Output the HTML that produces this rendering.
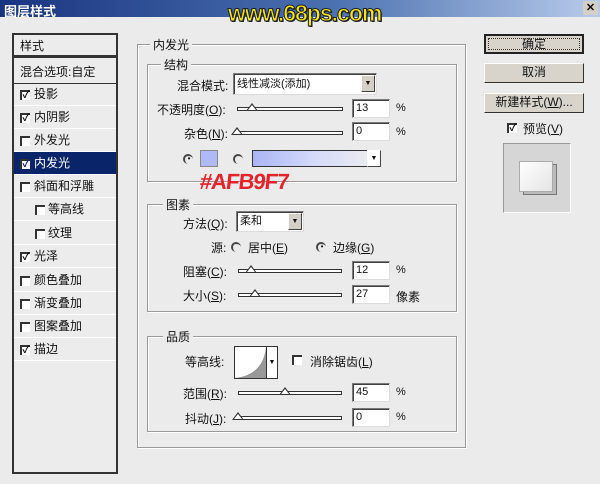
<!DOCTYPE html><html><head><meta charset="utf-8"><style>
*{margin:0;padding:0;box-sizing:border-box}
body{width:600px;height:484px;background:#ebebeb;font-family:"Liberation Sans","Noto Sans CJK SC",sans-serif;font-size:12px;color:#111;position:relative;overflow:hidden}
.a{position:absolute;white-space:nowrap}
.title{left:0;top:0;width:600px;height:17px;background:linear-gradient(90deg,#1a3580,#4a70b0 55%,#b8cbea)}
.grp{position:absolute;border:1px solid #9a9a9a;box-shadow:1px 1px 0 #fff inset,1px 1px 0 #fff}
.lbl{position:absolute;background:#ebebeb;padding:0 3px;font-size:12px}
.inp{position:absolute;background:#fff;border:1px solid #7a7a7a;border-right-color:#ddd;border-bottom-color:#ddd;box-shadow:1px 1px 0 #404040 inset;font-size:11px;padding-left:3px;line-height:17px}
.trk{position:absolute;height:4px;border:1px solid #333;background:#fff}
.th{position:absolute;width:0;height:0;border-left:6px solid transparent;border-right:6px solid transparent;border-bottom:8px solid #333}
.th:after{content:"";position:absolute;left:-4px;top:2px;border-left:4px solid transparent;border-right:4px solid transparent;border-bottom:5px solid #fff}
.cb{position:absolute;width:10px;height:10px;border-top:2px solid #333;border-left:2px solid #333;background:#fff;font-size:10px;line-height:8px;text-align:center;font-weight:bold}
.row{position:absolute;left:14px;width:102px;height:23px;border-bottom:1px solid #fff;line-height:22px;padding-left:6px}
.btn{position:absolute;left:484px;width:100px;height:20px;background:#d8d4cc;border:1px solid #fff;border-right-color:#333;border-bottom-color:#333;text-align:center;line-height:17px}
.dd{position:absolute;width:14px;height:17px;background:#d4d0c8;border:1px solid #fff;border-right-color:#444;border-bottom-color:#444;font-size:7px;text-align:center;line-height:15px}
.rd{position:absolute;width:10px;height:10px;border-radius:50%;border-top:2px solid #444;border-left:2px solid #444;font-size:8px;line-height:6px;text-align:center}
</style></head><body>
<div class="a title"></div>
<div class="a" style="left:4px;top:1px;color:#fff;font-weight:bold;font-size:13px">图层样式</div>
<div class="a" style="left:228px;top:0px;font-size:23px;font-weight:bold;color:#f5e51c;-webkit-text-stroke:1px #222;letter-spacing:-1px;text-shadow:1px 1px 0 #222">www.68ps.com</div>
<div class="a" style="left:583px;top:1px;width:15px;height:14px;background:#d4d0c8;font-size:11px;font-weight:bold;text-align:center;line-height:14px">✕</div>

<div class="a" style="left:12px;top:33px;width:106px;height:441px;border:2px solid #333;background:#ececec"></div>
<div class="row" style="top:35px;border-bottom:3px solid #333">样式</div>
<div class="row" style="top:61px;border-bottom:1px solid #333">混合选项:自定</div>
<div class="row" style="top:83px;padding-left:20px">投影</div>
<div class="row" style="top:106px;padding-left:20px">内阴影</div>
<div class="row" style="top:129px;padding-left:20px">外发光</div>
<div class="row" style="top:152px;padding-left:20px;background:#0a246a;color:#fff">内发光</div>
<div class="row" style="top:175px;padding-left:20px">斜面和浮雕</div>
<div class="row" style="top:198px;padding-left:34px">等高线</div>
<div class="row" style="top:222px;padding-left:34px">纹理</div>
<div class="row" style="top:245px;padding-left:20px">光泽</div>
<div class="row" style="top:269px;padding-left:20px">颜色叠加</div>
<div class="row" style="top:292px;padding-left:20px">渐变叠加</div>
<div class="row" style="top:315px;padding-left:20px">图案叠加</div>
<div class="row" style="top:338px;padding-left:20px">描边</div>
<div class="cb" style="left:20px;top:90px">✓</div>
<div class="cb" style="left:20px;top:113px">✓</div>
<div class="cb" style="left:20px;top:136px"></div>
<div class="cb" style="left:20px;top:159px;color:#0a246a">✓</div>
<div class="cb" style="left:20px;top:182px"></div>
<div class="cb" style="left:35px;top:205px"></div>
<div class="cb" style="left:35px;top:229px"></div>
<div class="cb" style="left:20px;top:252px">✓</div>
<div class="cb" style="left:20px;top:276px"></div>
<div class="cb" style="left:20px;top:299px"></div>
<div class="cb" style="left:20px;top:322px"></div>
<div class="cb" style="left:20px;top:345px">✓</div>

<div class="grp" style="left:137px;top:44px;width:329px;height:404px"></div>
<div class="lbl" style="left:150px;top:36px">内发光</div>
<div class="grp" style="left:147px;top:64px;width:310px;height:118px"></div>
<div class="lbl" style="left:161px;top:56px">结构</div>
<div class="a" style="left:177px;top:77px">混合模式:</div>
<div class="inp" style="left:233px;top:73px;width:144px;height:22px;line-height:20px">线性减淡(添加)</div>
<div class="dd" style="left:361px;top:75px">▼</div>
<div class="a" style="left:157px;top:101px">不透明度(<u>O</u>):</div>
<div class="trk" style="left:237px;top:107px;width:106px"></div><div class="th" style="left:246px;top:103px"></div>
<div class="inp" style="left:352px;top:99px;width:38px;height:19px">13</div><div class="a" style="left:396px;top:102px;font-size:11px">%</div>
<div class="a" style="left:184px;top:125px">杂色(<u>N</u>):</div>
<div class="trk" style="left:237px;top:131px;width:106px"></div><div class="th" style="left:231px;top:127px"></div>
<div class="inp" style="left:352px;top:122px;width:38px;height:19px">0</div><div class="a" style="left:396px;top:126px;font-size:11px">%</div>
<div class="rd" style="left:183px;top:154px">•</div>
<div class="a" style="left:200px;top:150px;width:18px;height:17px;background:#afb9f7;border:1px solid #888"></div>
<div class="rd" style="left:233px;top:154px"></div>
<div class="a" style="left:252px;top:150px;width:128px;height:17px;border:1px solid #333;background:linear-gradient(90deg,#a9b5f4,#d6dbfa 50%,#eee)"></div>
<div class="dd" style="left:367px;top:150px;height:17px;background:#fff">▼</div>
<div class="a" style="left:200px;top:169px;font-size:22px;font-weight:bold;color:#e4232b;letter-spacing:-1px;transform:skewX(-6deg)">#AFB9F7</div>

<div class="grp" style="left:147px;top:204px;width:310px;height:108px"></div>
<div class="lbl" style="left:163px;top:196px">图素</div>
<div class="a" style="left:183px;top:215px">方法(<u>Q</u>):</div>
<div class="inp" style="left:236px;top:211px;width:68px;height:21px;line-height:19px">柔和</div>
<div class="dd" style="left:288px;top:213px">▼</div>
<div class="a" style="left:211px;top:239px">源:</div>
<div class="rd" style="left:231px;top:242px"></div><div class="a" style="left:248px;top:239px">居中(<u>E</u>)</div>
<div class="rd" style="left:316px;top:242px">•</div><div class="a" style="left:333px;top:239px">边缘(<u>G</u>)</div>
<div class="a" style="left:183px;top:263px">阻塞(<u>C</u>):</div>
<div class="trk" style="left:238px;top:269px;width:104px"></div><div class="th" style="left:245px;top:265px"></div>
<div class="inp" style="left:352px;top:261px;width:38px;height:19px">12</div><div class="a" style="left:396px;top:264px;font-size:11px">%</div>
<div class="a" style="left:183px;top:287px">大小(<u>S</u>):</div>
<div class="trk" style="left:238px;top:293px;width:104px"></div><div class="th" style="left:249px;top:289px"></div>
<div class="inp" style="left:352px;top:285px;width:38px;height:19px">27</div><div class="a" style="left:396px;top:288px">像素</div>

<div class="grp" style="left:147px;top:336px;width:310px;height:96px"></div>
<div class="lbl" style="left:163px;top:328px">品质</div>
<div class="a" style="left:185px;top:353px">等高线:</div>
<div class="a" style="left:234px;top:346px;width:44px;height:33px;border:1px solid #333;background:#fff"></div>
<svg class="a" style="left:235px;top:347px" width="31" height="31"><path d="M0 31 Q28 28 31 0 L31 31Z" fill="#999"/></svg>
<div class="a" style="left:266px;top:347px;width:11px;height:31px;border-left:1px solid #333;font-size:7px;text-align:center;line-height:31px">▼</div>
<div class="cb" style="left:292px;top:355px"></div><div class="a" style="left:310px;top:353px">消除锯齿(<u>L</u>)</div>
<div class="a" style="left:183px;top:385px">范围(<u>R</u>):</div>
<div class="trk" style="left:238px;top:391px;width:104px"></div><div class="th" style="left:279px;top:387px"></div>
<div class="inp" style="left:352px;top:383px;width:38px;height:19px">45</div><div class="a" style="left:396px;top:386px;font-size:11px">%</div>
<div class="a" style="left:185px;top:410px">抖动(<u>J</u>):</div>
<div class="trk" style="left:238px;top:416px;width:104px"></div><div class="th" style="left:232px;top:412px"></div>
<div class="inp" style="left:352px;top:408px;width:38px;height:19px">0</div><div class="a" style="left:396px;top:411px;font-size:11px">%</div>

<div class="btn" style="top:34px;border:2px solid #222;outline:1px dotted #333;outline-offset:-5px">确定</div>
<div class="btn" style="top:63px">取消</div>
<div class="btn" style="top:93px">新建样式(<u>W</u>)...</div>
<div class="cb" style="left:507px;top:123px">✓</div><div class="a" style="left:523px;top:120px">预览(<u>V</u>)</div>
<div class="a" style="left:503px;top:143px;width:68px;height:70px;border:1px solid #999;border-right-color:#fff;border-bottom-color:#fff;background:#d6d6d6"></div>
<div class="a" style="left:523px;top:164px;width:34px;height:31px;background:#bbb;border:1px solid #777"></div>
<div class="a" style="left:519px;top:161px;width:34px;height:31px;background:linear-gradient(135deg,#fff,#e4e4e4);border:1px solid #aaa"></div>
</body></html>
